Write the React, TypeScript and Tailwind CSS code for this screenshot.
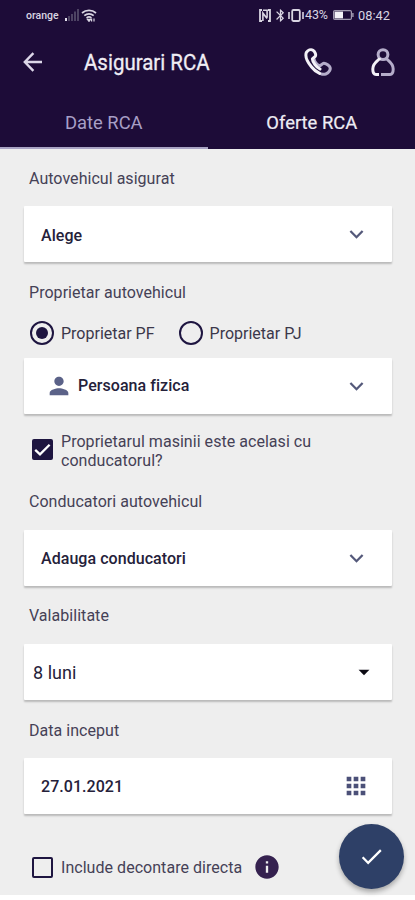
import { useState } from 'react';
import type { ReactNode } from 'react';
import { MdArrowDropDown, MdApps, MdBluetooth, MdCheck, MdInfo, MdPerson } from 'react-icons/md';

const StatusBar = () => (
  <div className="flex h-[30px] items-center justify-between pl-[26px] pr-[24px] text-[#d9d5e2]">
    <div className="flex items-center">
      <span className="w-[39px] pt-px text-[10.5px] font-medium">orange</span>
      <svg className="h-[12px] w-[14px]" viewBox="0 0 14 12">
        <rect x="0" y="9" width="2" height="3" fill="#e5e1ee" />
        <rect x="3" y="7" width="2" height="5" fill="#4d4363" />
        <rect x="6" y="5" width="2" height="7" fill="#4d4363" />
        <rect x="9" y="2.5" width="2" height="9.5" fill="#4d4363" />
        <rect x="12" y="0" width="2" height="12" fill="#4d4363" />
      </svg>
      <svg className="ml-[2px] h-[13px] w-[16px]" viewBox="0 0 16 13" fill="none" stroke="currentColor" strokeWidth="1.7">
        <path d="M1 4C5 .4 11 .4 15 4" />
        <path d="M3.3 6.6C6 4.2 10 4.2 12.7 6.6" />
        <path d="M5.6 9C7 7.8 9 7.8 10.4 9" />
        <path d="M8 12.4 6.4 10.4h3.2zM10.6 9.4v3M13 9.4v3" strokeWidth="1.2" />
      </svg>
    </div>
    <div className="flex items-center">
      <svg className="-ml-[2px] h-[13px] w-[12px]" viewBox="0 0 12 13" fill="none" stroke="currentColor" strokeWidth="1.8">
        <path d="M3 1H1v11h2M9 1h2v11H9" />
        <path d="M3.9 12V4.2l4.2 5.4M4 1.2h4.1V8.6" strokeWidth="1.6" />
      </svg>
      <MdBluetooth className="ml-[2px] size-[15px]" />
      <svg className="h-[13px] w-[16px]" viewBox="0 0 16 13" fill="none" stroke="currentColor">
        <rect x="4.2" y="1" width="7.6" height="11" rx="1.2" strokeWidth="1.8" />
        <path d="M1 3v7M15 3v7" strokeWidth="1.6" />
      </svg>
      <span className="ml-px w-[27px] pt-px text-[12.5px] tracking-[-0.1px]">43%</span>
      <svg className="ml-px h-[10px] w-[21px]" viewBox="0 0 21 10">
        <rect x=".6" y=".6" width="17.8" height="8.8" rx="1.2" fill="none" stroke="#a19ab0" strokeWidth="1.2" />
        <rect x="1.6" y="1.6" width="8.4" height="6.8" fill="#f4f2f8" />
        <rect x="19.2" y="3" width="1.4" height="4" fill="#a19ab0" />
      </svg>
      <span className="ml-[4px] w-[33px] pt-px text-[12.8px]">08:42</span>
    </div>
  </div>
);

const BackIcon = () => (
  <svg className="h-[20px] w-[20px]" viewBox="0 0 20 20" fill="none" stroke="#dcd7e8" strokeWidth="2.4">
    <path d="M19 10H2M10.4 1.2 1.8 10l8.6 8.8" />
  </svg>
);

const PhoneIcon = () => (
  <svg className="size-[30px]" viewBox="0 0 30 30" fill="none" strokeLinejoin="round" strokeLinecap="round">
    <path
      d="M11 12C11.4 14.8 14.2 18 17 18.8L19.9 16.6C21.2 15.6 24.8 17.5 26.6 19.6 28.4 22 26 25.9 22.8 27 21.6 27.4 20.4 27.6 18.4 27"
      stroke="#b5adca"
      strokeWidth="3"
    />
    <path
      d="M17 22C13.4 20.2 9.6 15.4 9.4 11.8L12.2 9.4C13.4 8 12 4.4 10 3.2 7.8 2 5 3 3.4 5.4 2 8.8 4 14.4 8.6 20 11.2 23.4 14 25.2 16.6 26.4"
      stroke="#f3f1f7"
      strokeWidth="3"
    />
  </svg>
);

const UserIcon = () => (
  <svg className="h-[30px] w-[26px]" viewBox="0 0 26 30" fill="none" strokeWidth="3">
    <circle cx="13" cy="7.6" r="4.9" stroke="#b5adca" />
    <path d="M16 11.2C17 13.2 23.2 15.6 23.2 22 23.2 26.4 22 27.4 20 27.4H11" stroke="#b5adca" />
    <path d="M10 11.2C9 13.2 2.8 15.6 2.8 22 2.8 26.4 4 27.4 6 27.4H9" stroke="#f3f1f7" />
  </svg>
);

const Label = ({ children }: { children: ReactNode }) => (
  <h2 className="flex h-[57px] items-center pl-[5px] pt-px text-[16px] tracking-[0.04px] text-[#454156]">{children}</h2>
);

const Field = ({ children }: { children: ReactNode }) => (
  <button
    type="button"
    className="mb-px flex h-[56px] w-full items-center justify-between rounded-[1px] bg-white pl-[17px] pr-[24px] text-left text-[16px] font-medium tracking-[0.05px] text-[#25213a] shadow-[0_2px_2px_rgba(0,0,0,0.22)]"
  >
    {children}
  </button>
);

const Chevron = () => (
  <svg className="size-[24px]" viewBox="0 0 24 24" fill="none" stroke="#54597a" strokeWidth="2.3">
    <path d="M6.4 9 12.5 15.2l6.1-6.2" />
  </svg>
);

const Radio = ({ label, checked, onClick }: { label: string; checked: boolean; onClick: () => void }) => (
  <button type="button" onClick={onClick} className="flex h-[25px] items-center text-[16px] text-[#3b384a]">
    <span className="mr-[7px] flex size-[24px] items-center justify-center rounded-full border-[2.5px] border-[#1e1540]">
      {checked && <span className="size-[12px] rounded-full bg-[#1e1540]" />}
    </span>
    <span className="pt-[2px]">{label}</span>
  </button>
);

const Checkbox = ({ checked, onClick }: { checked: boolean; onClick: () => void }) => (
  <button
    type="button"
    onClick={onClick}
    className={`mr-[8px] flex size-[21px] shrink-0 items-center justify-center rounded-[2px] border-2 border-[#1e1540] ${checked ? 'bg-[#1e1540]' : ''}`}
  >
    {checked && (
      <svg className="size-[17px] shrink-0" viewBox="0 0 17 17" fill="none" stroke="#fff" strokeWidth="2.3">
        <path d="M1.2 8.8 6 13.4 15.6 3.8" />
      </svg>
    )}
  </button>
);

const App = () => {
  const [owner, setOwner] = useState('PF');
  const [sameDriver, setSameDriver] = useState(true);
  const [directSettlement, setDirectSettlement] = useState(false);

  return (
    <div className="relative h-[900px] w-[415px] overflow-hidden bg-white font-['Roboto','Liberation_Sans',sans-serif]">
      <header className="h-[149px] bg-[#1d0c38]">
        <StatusBar />
        <div className="flex h-[64px] items-center pl-[23px] pr-[19px]">
          <BackIcon />
          <h1 className="ml-[41px] flex-1 origin-left scale-x-[0.91] pt-px text-[22.5px] text-[#efedf4] [-webkit-text-stroke:0.3px]">
            Asigurari RCA
          </h1>
          <span className="mr-[37px]">
            <PhoneIcon />
          </span>
          <UserIcon />
        </div>
        <nav className="grid h-[55px] grid-cols-2 text-[18.4px]">
          <button type="button" className="border-b-2 border-[#a9a4c4] pt-[5px] text-[#a79fc6]">Date RCA</button>
          <button type="button" className="pb-[2px] pl-px pt-[5px] text-[#eeecf4] [-webkit-text-stroke:0.2px]">Oferte RCA</button>
        </nav>
      </header>

      <main className="h-[746px] bg-[#eeeeee] pl-[24px] pr-[23px]">
        <Label><span className="pt-[2px]">Autovehicul asigurat</span></Label>
        <Field>
          <span className="pt-[3px]">Alege</span>
          <Chevron />
        </Field>

        <Label><span className="pt-[2px]">Proprietar autovehicul</span></Label>
        <div className="flex h-[38px] items-start gap-[24px] pl-[6px]">
          <Radio label="Proprietar PF" checked={owner === 'PF'} onClick={() => setOwner('PF')} />
          <Radio label="Proprietar PJ" checked={owner === 'PJ'} onClick={() => setOwner('PJ')} />
        </div>
        <Field>
          <span className="flex items-center">
            <MdPerson className="ml-[4px] mr-[5px] size-[28px] text-[#5b6288]" />
            Persoana fizica
          </span>
          <Chevron />
        </Field>
        <div className="flex h-[58px] items-start pl-[8px] pt-[17px] text-[16px] leading-[19px] text-[#454156]">
          <span className="mt-[7px]">
            <Checkbox checked={sameDriver} onClick={() => setSameDriver(!sameDriver)} />
          </span>
          <p className="w-[270px] tracking-[0.04px]">Proprietarul masinii este acelasi cu conducatorul?</p>
        </div>

        <Label>Conducatori autovehicul</Label>
        <Field>
          <span className="pt-px">Adauga conducatori</span>
          <Chevron />
        </Field>

        <Label>Valabilitate</Label>
        <Field>
          <span className="-ml-[8px] text-[18px] font-normal">8 luni</span>
          <MdArrowDropDown className="-mr-[9px] size-[26px] text-[#0c0a14]" />
        </Field>

        <Label><span className="pt-[2px]">Data inceput</span></Label>
        <Field>
          <span className="pt-px">27.01.2021</span>
          <MdApps className="-mr-[2px] size-[28px] text-[#4b5078]" />
        </Field>

        <div className="flex h-[80px] items-center pl-[8px] pt-[24px] text-[16px] text-[#454156]">
          <Checkbox checked={directSettlement} onClick={() => setDirectSettlement(!directSettlement)} />
          <span className="pt-[2px] tracking-[0.04px]">Include decontare directa</span>
          <MdInfo className="ml-[11px] size-[28px] text-[#35214f]" />
        </div>
      </main>

      <button
        type="button"
        className="absolute bottom-[11px] right-[11px] flex size-[65px] items-center justify-center rounded-full bg-[#2e4067] shadow-[0_3px_5px_rgba(0,0,0,0.3)]"
      >
        <MdCheck className="size-[27px] text-white" />
      </button>
    </div>
  );
};

export default App;
